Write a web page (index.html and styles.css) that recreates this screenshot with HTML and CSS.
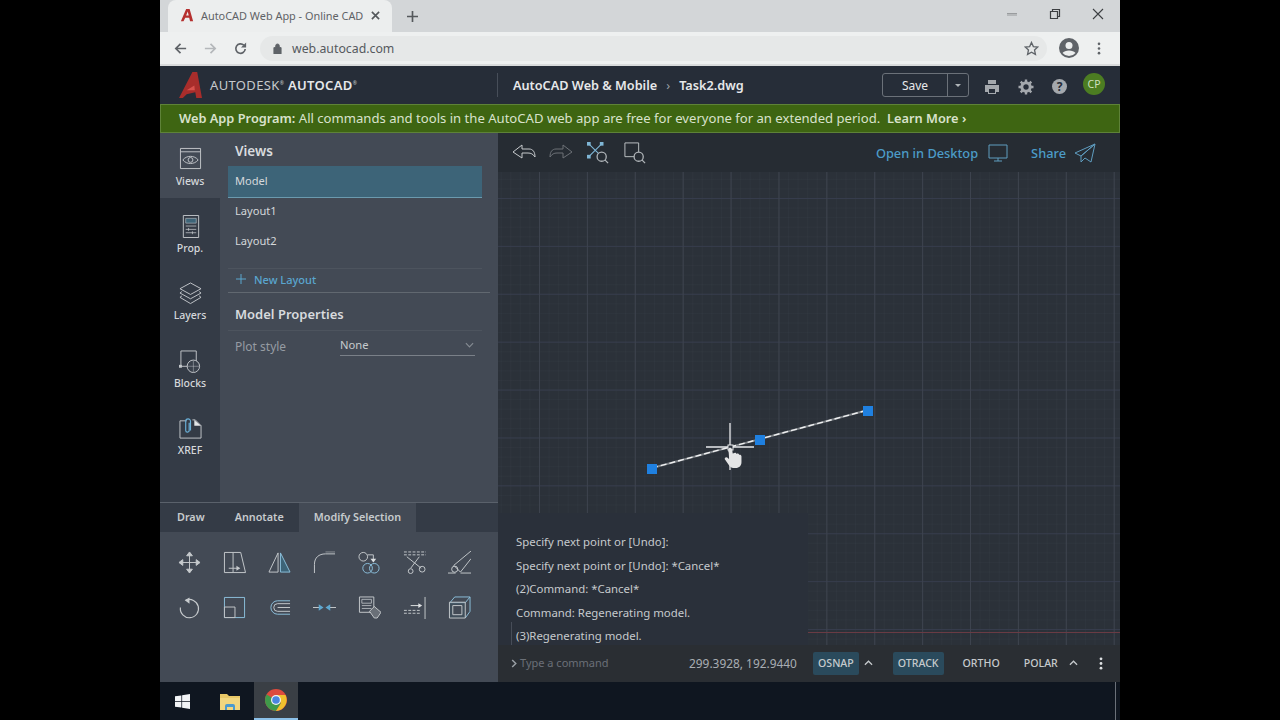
FILE: index.html
```html
<!DOCTYPE html>
<html lang="en">
<head>
<meta charset="utf-8">
<title>AutoCAD Web App</title>
<link rel="stylesheet" href="styles.css">
</head>
<body>
<div class="screen">
  <div class="tabstrip">
    <div class="tab">
      <svg class="favicon" viewBox="0 0 16 16"><path d="M1 15 7 1h4l4 14h-3.500L10.500 11H6L4 15zM7 8.500h3L8.800 4z" fill="#b5302f" fill-rule="evenodd"/></svg>
      <span class="tab-title">AutoCAD Web App - Online CAD</span>
      <svg class="tab-x" viewBox="0 0 10 10"><path d="M1 1l8 8M9 1l-8 8" stroke="#55595c" stroke-width="1.800"/></svg>
    </div>
    <svg class="newtab" viewBox="0 0 12 12"><path d="M6 0v12M0 6h12" stroke="#55595c" stroke-width="1.800"/></svg>
    <div class="winbtns">
      <svg viewBox="0 0 12 12"><path d="M1 5.500h10M1 7h10" stroke="#8a8d8f" stroke-width=".8"/></svg>
      <svg viewBox="0 0 12 12"><path d="M1.500 3.500h7v7h-7zM3.500 3.500v-2h7v7h-2" fill="none" stroke="#3c3f42" stroke-width="1.200"/></svg>
      <svg viewBox="0 0 12 12"><path d="M1 1l10 10M11 1L1 11" stroke="#3c3f42" stroke-width="1.100"/></svg>
    </div>
  </div>
  <div class="toolbar">
    <svg class="nav" viewBox="0 0 16 16"><path d="M14 8H3M8 3 3 8l5 5" fill="none" stroke="#5f6368" stroke-width="1.800"/></svg>
    <svg class="nav" viewBox="0 0 16 16"><path d="M2 8h11M8 3l5 5-5 5" fill="none" stroke="#b4b7ba" stroke-width="1.800"/></svg>
    <svg class="nav" viewBox="0 0 16 16"><path d="M13 8.500A5 5 0 1 1 11.500 4.500" fill="none" stroke="#5f6368" stroke-width="1.800"/><path d="M14 1.500V7H8.500z" fill="#5f6368"/></svg>
    <div class="omnibox">
      <svg class="lock" viewBox="0 0 10 12"><path d="M1 5h8v7H1zM3 5V3a2 2 0 0 1 4 0v2" fill="#5f6368" stroke="#5f6368"/></svg>
      <span class="url">web.autocad.com</span>
      <svg class="star" viewBox="0 0 16 16"><path d="M8 1.500l2 4.400 4.700.5-3.500 3.200 1 4.700L8 11.900l-4.200 2.400 1-4.700L1.300 6.400 6 5.900z" fill="none" stroke="#5f6368" stroke-width="1.400"/></svg>
    </div>
    <svg class="avatar" viewBox="0 0 20 20"><circle cx="10" cy="10" r="10" fill="#5f6368"/><circle cx="10" cy="7.500" r="3.500" fill="#eceeee"/><path d="M3.500 15c2-3.500 11-3.500 13 0a8.500 8.500 0 0 1-13 0z" fill="#eceeee"/></svg>
    <svg class="kebab" viewBox="0 0 4 14"><g fill="#5f6368"><circle cx="2" cy="2" r="1.400"/><circle cx="2" cy="7" r="1.400"/><circle cx="2" cy="12" r="1.400"/></g></svg>
  </div>

  <header class="appbar">
    <svg class="logo" viewBox="0 0 24 28"><path d="M0 27 14 0h5l5 27h-6l-1-6-9 2-4 4z" fill="#a82d2b"/><path d="M8 19l8-5 .5 5z" fill="#d8524d"/></svg>
    <span class="brand">AUTODESK<sup>®</sup> <b>AUTOCAD</b><sup>®</sup></span>
    <div class="crumbs"><b>AutoCAD Web &amp; Mobile</b><span class="crumb-sep">›</span><b>Task2.dwg</b></div>
    <div class="appbar-right">
      <div class="save"><span class="save-label">Save</span><span class="save-caret"><i></i></span></div>
      <svg class="appicon" viewBox="0 0 16 16"><path d="M4 1h8v4H4zM1 6h14v7h-3v2H4v-2H1z" fill="#a4a8ad"/><path d="M5 10h6v4H5z" fill="#262d38"/></svg>
      <svg class="appicon" viewBox="0 0 16 16"><circle cx="8" cy="8" r="4.200" fill="none" stroke="#a4a8ad" stroke-width="3"/><path d="M8 0.500v3M8 12.500v3M.5 8h3M12.500 8h3M2.700 2.700l2.100 2.100M11.200 11.200l2.100 2.100M13.300 2.700l-2.100 2.100M4.800 11.200l-2.100 2.100" stroke="#a4a8ad" stroke-width="2.400"/></svg>
      <div class="help">?</div>
      <div class="user">CP</div>
    </div>
  </header>

  <div class="banner"><b>Web App Program:</b> All commands and tools in the AutoCAD web app are free for everyone for an extended period.&nbsp; <b>Learn More ›</b></div>

  <main class="main">
    <div class="left">
      <div class="left-top">
        <nav class="rail">
          <div class="rail-item active">
            <svg viewBox="0 0 24 24"><path d="M1.500 1.500h21v21h-21zM1.500 5h21" fill="none" stroke="#c2c6ca"/><path d="M4 13.500c4-5 12-5 16 0-4 5-12 5-16 0z" fill="none" stroke="#c2c6ca"/><circle cx="12" cy="13.500" r="2.500" fill="none" stroke="#c2c6ca"/></svg>
            <span>Views</span>
          </div>
          <div class="rail-item">
            <svg viewBox="0 0 24 24"><path d="M4.500 .5h16v23h-16z" fill="none" stroke="#c2c6ca"/><path d="M7 3.500h11v5H7z" fill="#3d6478" stroke="#c2c6ca" stroke-width=".6"/><path d="M7 11.500h11M7 15h11M7 18.500h11M10 13.500v3M14 17v3" stroke="#c2c6ca" stroke-width=".8"/></svg>
            <span>Prop.</span>
          </div>
          <div class="rail-item">
            <svg viewBox="0 0 24 24"><g fill="none" stroke="#c2c6ca"><path d="M12 1 23 7 12 13 1 7zM3 10 1 11.500 12 17.500 23 11.500 21 10M3 14.500 1 16 12 22.500 23 16 21 14.500"/></g></svg>
            <span>Layers</span>
          </div>
          <div class="rail-item">
            <svg viewBox="0 0 24 24"><path d="M2 1h16v16H2z" fill="none" stroke="#c2c6ca"/><circle cx="15" cy="17" r="6.500" fill="#3a414c" stroke="#c2c6ca"/><path d="M8.500 17h13M15 11v12" stroke="#c2c6ca" stroke-width=".5"/><rect x="0" y="15.500" width="3" height="3" fill="#c2c6ca"/></svg>
            <span>Blocks</span>
          </div>
          <div class="rail-item">
            <svg viewBox="0 0 24 24"><path d="M8 4H1v18h22V9l-6-6h-3" fill="none" stroke="#c2c6ca"/><path d="M16 3v6h7z" fill="#e4e6e8"/><path d="M12 14V4.500a2.500 2.500 0 0 0-5 0V14a1.800 1.800 0 0 0 3.600 0V6" fill="none" stroke="#6ab0d8" stroke-width="1.200"/></svg>
            <span>XREF</span>
          </div>
        </nav>
        <section class="panel">
          <h2 class="panel-title">Views</h2>
          <ul class="views">
            <li class="view selected">Model</li>
            <li class="view">Layout1</li>
            <li class="view">Layout2</li>
          </ul>
          <div class="newlayout"><svg class="plus" viewBox="0 0 10 10"><path d="M5 0v10M0 5h10" stroke="#5aa6cf"/></svg>New Layout</div>
          <h2 class="props-title">Model Properties</h2>
          <div class="prop-row">
            <span class="prop-label">Plot style</span>
            <div class="select"><span>None</span><svg viewBox="0 0 10 6"><path d="M1 1l4 4 4-4" fill="none" stroke="#858b92" stroke-width="1.300"/></svg></div>
          </div>
        </section>
      </div>
      <section class="ribbon">
        <div class="ribbon-tabs">
          <span class="rtab">Draw</span>
          <span class="rtab">Annotate</span>
          <span class="rtab current">Modify Selection</span>
        </div>
        <div class="tools">
          <svg viewBox="0 0 24 24"><g stroke="#c6cacd" fill="#c6cacd" stroke-width="1"><path d="M12 3v18M3 12h18" fill="none"/><path d="M12 1l3 4H9zM12 23l3-4H9zM1 12l4-3v6zM23 12l-4-3v6z"/></g></svg>
          <svg viewBox="0 0 24 24"><path d="M1.500 1.500h9v21h-9zM10.500 1.500h8l5 21h-13" fill="none" stroke="#c6cacd"/><path d="M6 18h11" stroke="#c6cacd"/><path d="M18 18l-4-2.500v5z" fill="#c6cacd"/></svg>
          <svg viewBox="0 0 24 24"><path d="M10.500 2v20H1z" fill="none" stroke="#c6cacd"/><path d="M13 2v20h10z" fill="#3d6478" stroke="#8cc0dc"/></svg>
          <svg viewBox="0 0 24 24"><path d="M1.500 23V14C1.500 7 6 3 13 3h10" fill="none" stroke="#c6cacd"/><path d="M13 1h10" stroke="#8a9096"/></svg>
          <svg viewBox="0 0 24 24"><g fill="none" stroke="#c6cacd"><circle cx="5.500" cy="6" r="4.500"/><path d="M10 4h6v5"/></g><path d="M16 12l-3-4h6z" fill="#dfe2e4"/><g fill="none" stroke="#8cc0dc"><circle cx="10" cy="18" r="5"/><circle cx="17" cy="18" r="5"/></g></svg>
          <svg viewBox="0 0 24 24"><g stroke="#c6cacd" fill="none"><path d="M1 1h23M1 4h23" stroke-dasharray="3 1.500"/><path d="M4 6l15 12M17 6l-9 12"/><circle cx="20" cy="19" r="3"/><circle cx="8" cy="21" r="2.500"/></g></svg>
          <svg viewBox="0 0 24 24"><path d="M0 23h8M13 23h11" stroke="#c6cacd"/><path d="M6 15 24 0M13 22 24 8" stroke="#c6cacd"/><circle cx="7" cy="19" r="3.200" fill="none" stroke="#c6cacd"/><path d="M6 15l7 7" stroke="#c6cacd"/></svg>
          <svg viewBox="0 0 24 24"><path d="M8 4.500A9.500 9.500 0 1 1 2.500 12" fill="none" stroke="#c6cacd" stroke-width="1.200"/><path d="M7 4.500l5-3v6.500z" fill="#c6cacd"/></svg>
          <svg viewBox="0 0 24 24"><path d="M1.500 1.500h21v21h-21z" fill="none" stroke="#8cc0dc"/><path d="M1.500 11.500h11v11h-11z" fill="#434a55" stroke="#c6cacd"/></svg>
          <svg viewBox="0 0 24 24"><path d="M23 5H10a7 7 0 0 0 0 14h13" fill="none" stroke="#8cc0dc"/><path d="M23 8H10a4 4 0 0 0 0 8h13M23 12H10" fill="none" stroke="#c6cacd"/></svg>
          <svg viewBox="0 0 24 24"><path d="M0 12h7M17 12h7" stroke="#c6cacd"/><path d="M6 8.500l5 3.500-5 3.500zM18 8.500l-5 3.500 5 3.500z" fill="#5fa8d0"/></svg>
          <svg viewBox="0 0 24 24"><path d="M1.500 1h15v16h-15z" fill="none" stroke="#c6cacd"/><path d="M4 3.500h10v4H4z" fill="none" stroke="#c6cacd" stroke-width=".8"/><path d="M4 10h10M4 13h10" stroke="#c6cacd" stroke-width=".8"/><path d="M12 16l5-5 7 6-4 6h-3z" fill="#6a7078" stroke="#dfe2e4" stroke-width=".8"/></svg>
          <svg viewBox="0 0 24 24"><path d="M23 1v23" stroke="#c6cacd"/><path d="M1 15h18M1 18h18" stroke="#c6cacd" stroke-dasharray="3 1.500"/><path d="M8 10h9" stroke="#dfe2e4"/><path d="M20 10l-4-2.500v5z" fill="#dfe2e4"/></svg>
          <svg viewBox="0 0 24 24"><path d="M2 7 7 1h16v15l-5 7" fill="none" stroke="#8cc0dc"/><path d="M23 1l-5 6M18 7H2" stroke="#8cc0dc"/><path d="M1.500 6.500h16.500v16.500H1.500z" fill="#3e5260" fill-opacity=".5" stroke="#c6cacd"/><path d="M5 10h9.500v9.500H5z" fill="#434a55" stroke="#c6cacd"/></svg>
        </div>
      </section>
    </div>

    <div class="work">
      <div class="worktools">
        <svg class="wt" viewBox="0 0 24 20"><path d="M1 9 10 2v4h7c4 0 6 3 6 8-2-3-4-4-7-4h-6v5z" fill="none" stroke="#c6cacd"/></svg>
        <svg class="wt" viewBox="0 0 24 20"><path d="M23 9 14 2v4H7c-4 0-6 3-6 8 2-3 4-4 7-4h6v5z" fill="none" stroke="#6c7177"/></svg>
        <svg class="wt" viewBox="0 0 24 24"><path d="M2 2l14 14M16 2 2 16" stroke="#7fb6d6" stroke-width="1.200"/><g fill="#7fb6d6"><rect x="0" y="0" width="4" height="4"/><rect x="14" y="0" width="4" height="4"/><rect x="0" y="14" width="4" height="4"/></g><circle cx="16" cy="16" r="5" fill="#262c33" stroke="#b0b5b9" stroke-width="1.400"/><path d="M19.500 19.500 23 23" stroke="#b0b5b9" stroke-width="1.400"/></svg>
        <svg class="wt" viewBox="0 0 24 24"><path d="M1 1h15v15H1z" fill="none" stroke="#c6cacd"/><circle cx="16" cy="16" r="5" fill="#262c33" stroke="#b0b5b9" stroke-width="1.400"/><path d="M19.500 19.500 23 23" stroke="#b0b5b9" stroke-width="1.400"/></svg>
        <div class="worktools-right">
          <span class="wlink">Open in Desktop</span>
          <svg class="monitor" viewBox="0 0 20 18"><path d="M1 1h18v13H1zM6 17h8M10 14v3" fill="none" stroke="#5f9dc0"/></svg>
          <span class="wlink share">Share</span>
          <svg class="plane" viewBox="0 0 22 20"><path d="M21 1 1 10l6 3zM21 1 7 13v6l4-4M21 1l-4 18-6-4" fill="none" stroke="#5f9dc0"/></svg>
        </div>
      </div>
      <div class="canvas">
        <svg class="drawing" viewBox="0 0 622 473">
          <path d="M154 296 370 238" stroke="#7c8186" stroke-width="2"/>
          <path d="M154 296 370 238" stroke="#f0f1f2" stroke-width="1.400" stroke-dasharray="6 3"/>
          <g fill="#1f80e0"><rect x="149" y="292" width="10" height="10"/><rect x="257" y="263" width="10" height="10"/><rect x="365" y="234" width="10" height="10"/></g>
          <path d="M232 251v47" stroke="#e8eaec" stroke-width="1.300"/>
          <path d="M208 275h48" stroke="#e8eaec" stroke-width="1.300"/>
          <rect x="230" y="273" width="5" height="5" fill="#2a303a" stroke="#e8eaec"/>
          <path transform="translate(233 285) scale(1.150) translate(-233 -288)" d="M231 284c-1-2 0-4 1-4s1.800.6 2 1.500l.5 3.500.8-.3c1-.8 2.200-.5 2.500.6.800-.5 2-.2 2.300.8.900-.3 2 .2 2 1.400v5c0 3-2 5-5 5h-2c-2 0-3-1-4-2.500l-3.500-5c-.4-1.500 1.300-2.500 2.500-1.400l1.300 1.300z" fill="#e4e5e6"/>
        </svg>
        <div class="history">
          <p>Specify next point or [Undo]:</p>
          <p>Specify next point or [Undo]: *Cancel*</p>
          <p>(2)Command: *Cancel*</p>
          <p>Command: Regenerating model.</p>
          <p>(3)Regenerating model.</p>
          <i class="history-tick"></i>
        </div>
        <div class="redline"></div>
      </div>
      <div class="status">
        <svg class="prompt" viewBox="0 0 6 10"><path d="M1 1l4 4-4 4" fill="none" stroke="#9aa0a6" stroke-width="1.600"/></svg>
        <span class="cmd">Type a command</span>
        <span class="coords">299.3928, 192.9440</span>
        <span class="chip on">OSNAP</span>
        <svg class="caret" viewBox="0 0 10 6"><path d="M1 5l4-4 4 4" fill="none" stroke="#c6cacd" stroke-width="1.400"/></svg>
        <span class="chip on otrack">OTRACK</span>
        <span class="chip ortho">ORTHO</span>
        <span class="chip polar">POLAR</span>
        <svg class="caret" viewBox="0 0 10 6"><path d="M1 5l4-4 4 4" fill="none" stroke="#c6cacd" stroke-width="1.400"/></svg>
        <svg class="dots" viewBox="0 0 4 14"><g fill="#dfe2e4"><circle cx="2" cy="2" r="1.500"/><circle cx="2" cy="7" r="1.500"/><circle cx="2" cy="12" r="1.500"/></g></svg>
      </div>
    </div>
  </main>

  <footer class="taskbar">
    <svg class="start" viewBox="0 0 16 16"><path d="M0 2.500 6.800 1.500V7.500H0zM7.600 1.400 16 0V7.500H7.600zM0 8.300H6.800V14.500L0 13.500zM7.600 8.300H16V16L7.600 14.700z" fill="#f2f4f6"/></svg>
    <svg class="folder" viewBox="0 0 20 18"><path d="M0 2h7l2 2h11v14H0z" fill="#e8c766"/><path d="M0 6h20v12H0z" fill="#f1d67f"/><path d="M5 18v-4a2 2 0 0 1 2-2h6a2 2 0 0 1 2 2v4h-2v-3H7v3z" fill="#4a9ad0"/></svg>
    <div class="chrome-btn">
      <svg viewBox="0 0 22 22"><circle cx="11" cy="11" r="11" fill="#dd4b3e"/><path d="M11 11 1.500 5.500A11 11 0 0 0 11 22l5-8z" fill="#3f9a4a"/><path d="M11 6h9.500A11 11 0 0 1 11 22l5-8z" fill="#f0c12e"/><circle cx="11" cy="11" r="5" fill="#f2f2f2"/><circle cx="11" cy="11" r="3.800" fill="#4a86e0"/></svg>
    </div>
    <div class="task-end"></div>
  </footer>
</div>
</body>
</html>
```

FILE: styles.css
```css
* { box-sizing: border-box; }
html, body { margin: 0; height: 100%; }
body {
  background: #000;
  font-family: "Noto Sans", "Liberation Sans", sans-serif;
  overflow: hidden;
}
.screen {
  width: 960px;
  height: 720px;
  margin: 0 auto;
  display: flex;
  flex-direction: column;
  background: #262d38;
}
svg { display: block; flex: none; }

/* browser chrome */
.tabstrip {
  height: 32px;
  background: #d3d6d8;
  display: flex;
  align-items: flex-end;
  padding-left: 8px;
}
.tab {
  width: 224px;
  height: 32px;
  background: #eceeee;
  border-radius: 8px 8px 0 0;
  display: flex;
  align-items: center;
  padding: 0 9px 2px 12px;
}
.favicon { width: 14px; height: 14px; }
.tab-title {
  margin-left: 7px;
  width: 164px;
  white-space: nowrap;
  font-size: 10.900px;
  color: #5f6266;
}
.tab-x { width: 9px; height: 9px; margin-left: 6px; }
.newtab { width: 11px; height: 11px; margin: 0 0 10px 15px; }
.winbtns {
  margin-left: auto;
  align-self: flex-start;
  display: flex;
  gap: 31px;
  padding: 8px 16px 0 0;
}
.winbtns svg { width: 12px; height: 12px; }
.toolbar {
  height: 34px;
  background: #eef0f0;
  border-bottom: 2px solid #d9dbdc;
  display: flex;
  align-items: center;
  padding-left: 13px;
}
.nav { width: 15px; height: 15px; margin-right: 15px; }
.omnibox {
  width: 787px;
  height: 25px;
  margin-left: -3px;
  border-radius: 13px;
  background: #e6e8e8;
  display: flex;
  align-items: center;
  padding: 0 8px 0 13px;
}
.lock { width: 9px; height: 11px; }
.url { margin-left: 10px; font-size: 12.300px; color: #55595e; }
.star { width: 15px; height: 15px; margin-left: auto; }
.avatar { width: 20px; height: 20px; margin-left: 12px; }
.kebab { width: 4px; height: 13px; margin-left: 18px; }

/* app bar */
.appbar {
  height: 38px;
  background: #262d38;
  display: flex;
  align-items: center;
  padding-left: 19px;
  color: #e6e8ea;
}
.logo { width: 23px; height: 27px; }
.brand {
  margin-left: 8px;
  width: 287px;
  font-size: 13px;
  letter-spacing: .35px;
  color: #c6cacd;
  white-space: nowrap;
}
.brand b { color: #e6e8ea; font-weight: 600; }
.brand sup { font-size: 5px; }
.crumbs {
  height: 24px;
  border-left: 1px solid #474e59;
  padding-left: 15px;
  display: flex;
  align-items: center;
  font-size: 12.700px;
}
.crumbs b { font-weight: 600; }
.crumb-sep { margin: 0 9px; color: #9aa0a6; }
.appbar-right { margin-left: auto; display: flex; align-items: center; padding-right: 15px; }
.save {
  width: 87px;
  height: 24px;
  border: 1px solid #6b7179;
  border-radius: 3px;
  display: flex;
  align-items: center;
  font-size: 12px;
}
.save-label { flex: 1; text-align: center; }
.save-caret {
  width: 21px;
  height: 22px;
  border-left: 1px solid #6b7179;
  display: flex;
  align-items: center;
  justify-content: center;
}
.save-caret i {
  border: 3.500px solid transparent;
  border-top-color: #b0b5b9;
  border-bottom: 0;
}
.appicon { width: 16px; height: 16px; margin: 3px 0 0 15px; }
.appicon + .appicon { margin-left: 18px; }
.help {
  width: 15px;
  height: 15px;
  margin: 3px 0 0 18px;
  border-radius: 50%;
  background: #a4a8ad;
  color: #262d38;
  font-size: 12px;
  font-weight: 700;
  line-height: 15px;
  text-align: center;
}
.user {
  width: 22px;
  height: 22px;
  margin: -2px 0 0 16px;
  border-radius: 50%;
  background: #4c7d22;
  color: #cfe0bf;
  font-size: 10.500px;
  line-height: 22px;
  text-align: center;
}
.banner {
  height: 29px;
  background: #3e6512;
  border: 1px solid #5e8238;
  padding-left: 18px;
  color: #d9e2cc;
  font-size: 13.100px;
  line-height: 26px;
  white-space: nowrap;
}
.banner b { font-size: 12.800px; font-weight: 600; }

/* main */
.main { height: 549px; display: flex; }
.left { width: 338px; display: flex; flex-direction: column; background: #434a55; }
.left-top { height: 370px; display: flex; border-bottom: 1px solid #5a616b; }
.rail { width: 60px; background: #343b46; flex: none; }
.rail-item {
  height: 67.400px;
  padding-top: 17px;
  display: flex;
  flex-direction: column;
  align-items: center;
  color: #d5d8db;
  font-size: 10.500px;
  font-weight: 500;
}
.rail-item.active { height: 65px; padding-top: 14px; background: #434a55; }
.rail-item svg { width: 23px; height: 23px; margin-bottom: 3px; }
.rail-item.active svg { margin-bottom: 4px; }
.panel { flex: 1; padding: 0 8px 0 8px; }
.panel-title {
  margin: 0;
  height: 33px;
  padding-left: 7px;
  font-size: 13.500px;
  line-height: 36px;
  font-weight: 600;
  color: #d8dbde;
}
.views { list-style: none; margin: 0; padding: 0; width: 254px; border-bottom: 1px solid #4d545e; height: 103px; }
.view { height: 30px; line-height: 26px; padding-left: 7px; font-size: 11.100px; color: #d5d8db; }
.view.selected { height: 32px; background: #3d6478; border-bottom: 1px solid #6b9aae; line-height: 30px; }
.newlayout {
  height: 24px;
  border-bottom: 1px solid #616870;
  padding-left: 8px;
  display: flex;
  align-items: center;
  color: #5aa6cf;
  font-size: 11px;
  font-weight: 500;
  padding-bottom: 3px;
}
.plus { width: 10px; height: 10px; margin-right: 8px; }
.props-title {
  margin: 0;
  width: 254px;
  height: 38px;
  border-bottom: 1px solid #4d545e;
  padding-left: 7px;
  font-size: 13px;
  font-weight: 600;
  line-height: 43px;
  color: #d8dbde;
}
.prop-row { display: flex; padding: 5px 0 0 7px; align-items: flex-start; }
.prop-label { width: 105px; font-size: 12px; color: #969ca3; line-height: 21px; }
.select {
  width: 135px;
  height: 20px;
  border-bottom: 1px solid #7a8088;
  display: flex;
  align-items: center;
  justify-content: space-between;
  padding-right: 1px;
  font-size: 11.200px;
  color: #c6cacd;
  padding-bottom: 2px;
}
.select svg { width: 9px; height: 6px; }
.ribbon { flex: 1; }
.ribbon-tabs { height: 29px; display: flex; background: #343b46; }
.rtab {
  font-size: 10.800px;
  font-weight: 600;
  color: #c6cacd;
  line-height: 27px;
  padding: 0 15px;
}
.rtab:first-child { padding: 0 15px 0 17px; }
.rtab.current { background: #434a55; }
.tools {
  display: grid;
  grid-template-columns: repeat(7, 23px);
  column-gap: 22px;
  row-gap: 22px;
  padding: 19px 0 0 18px;
}
.tools svg { width: 23px; height: 23px; }

/* workspace */
.work { flex: 1; display: flex; flex-direction: column; min-width: 0; }
.worktools {
  height: 39px;
  background: #262c33;
  display: flex;
  align-items: center;
  padding: 0 22px 0 14px;
}
.wt { width: 24px; height: 22px; margin-right: 13px; }
.worktools-right { margin-left: auto; display: flex; align-items: center; }
.wlink { color: #4c9cc8; font-size: 12.800px; font-weight: 500; }
.monitor { width: 20px; height: 18px; margin-left: 10px; }
.share { margin-left: 23px; }
.plane { width: 22px; height: 20px; margin-left: 8px; margin-right: 2px; }
.canvas {
  position: relative;
  height: 473px;
  overflow: hidden;
  background-color: #2b3139;
  background-image:
    linear-gradient(90deg, #3d434e 1px, transparent 1px),
    linear-gradient(180deg, #363c4c 1px, transparent 1px),
    linear-gradient(90deg, rgba(150,160,175,.035) 1px, transparent 1px),
    linear-gradient(180deg, rgba(150,160,175,.03) 1px, transparent 1px);
  background-size: 47.900px 100%, 100% 47.900px, 9.580px 100%, 100% 9.580px;
  background-position: 41px 0, 0 26px, 41px 0, 0 26px;
}
.drawing { position: absolute; inset: 0; width: 622px; height: 473px; }
.history {
  position: absolute;
  left: 0;
  bottom: 0;
  width: 310px;
  height: 132px;
  padding: 17px 0 0 18px;
  background: #2a303a;
  color: #c6cacd;
  font-size: 11.400px;
  overflow: hidden;
}
.history p { margin: 0; height: 23.500px; line-height: 23.500px; white-space: nowrap; }
.history-tick { position: absolute; left: 13px; bottom: 0; width: 1px; height: 23px; background: #474d58; }
.redline { position: absolute; left: 310px; right: 0; top: 460px; height: 1px; background: #6a3b44; }
.status {
  height: 37px;
  background: #2a2e33;
  display: flex;
  align-items: center;
  padding: 0 0 1px 13px;
  font-size: 11px;
  color: #c6cacd;
}
.prompt { width: 6px; height: 9px; margin-right: 3px; }
.cmd { width: 169px; color: #6b7078; font-size: 11px; margin-bottom: 2px; }
.coords { width: 124px; color: #a8adb2; font-size: 11.900px; margin-bottom: 1px; }
.chip { padding: 0 5px; height: 23px; line-height: 23px; border-radius: 2px; font-weight: 500; font-size: 10.600px; }
.chip.on { background: #2a4a5c; }
.caret { width: 9px; height: 6px; margin: 0 0 0 5px; }
.otrack { margin-left: 20px; }
.ortho { margin-left: 14px; }
.polar { margin-left: 14px; }
.polar + .caret { margin-left: 6px; }
.dots { width: 4px; height: 13px; margin-left: 21px; }

/* taskbar */
.taskbar {
  flex: 1;
  background: #0f1620;
  display: flex;
  align-items: center;
  padding-left: 15px;
}
.start { width: 15px; height: 15px; }
.folder { width: 20px; height: 18px; margin-left: 30px; }
.chrome-btn {
  width: 44px;
  height: 100%;
  margin-left: 14px;
  background: #3a3f45;
  border-bottom: 2px solid #8cc0e8;
  display: flex;
  align-items: center;
  justify-content: center;
}
.chrome-btn svg { width: 22px; height: 22px; }
.task-end { margin-left: auto; margin-right: 4px; width: 1px; height: 100%; background: #6a7078; }
```
